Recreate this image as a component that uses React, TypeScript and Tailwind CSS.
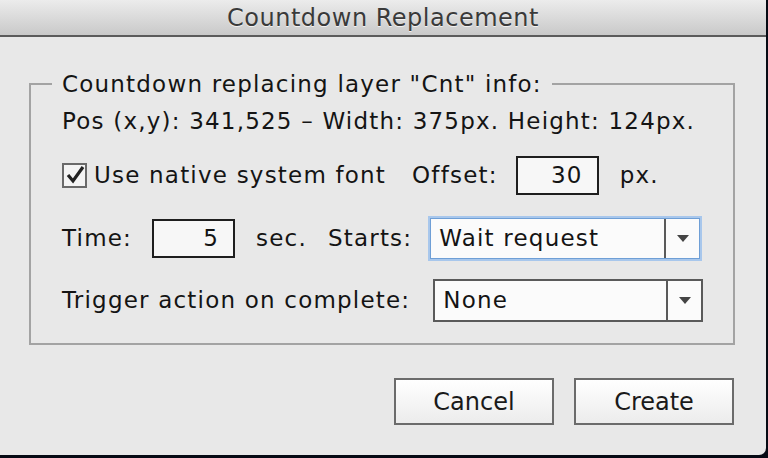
import React from "react";

const font = { fontFamily: '"DejaVu Sans", "Liberation Sans", sans-serif' };

function TextBox({ value }: { value: string }) {
  return (
    <div className="flex h-[39px] w-[83px] items-center justify-end border-2 border-[#1e1e1e] bg-[#f7f7f7] pr-[14px]">
      {value}
    </div>
  );
}

function Select({ value, focused }: { value: string; focused?: boolean }) {
  return (
    <div
      className={
        focused
          ? "flex h-[41px] w-[270px] items-stretch border border-[#6f9fd6] bg-[#fbfbfb] shadow-[0_0_0_2px_#a8c7ec]"
          : "flex h-[43px] w-[270px] items-stretch border-2 border-[#5a5a5a] bg-[#fbfbfb]"
      }
    >
      <div className="flex flex-1 items-center pl-[8px]">{value}</div>
      <div className="flex w-[35px] items-center justify-center border-l-2 border-[#5a5a5a]">
        <svg width="12" height="7" viewBox="0 0 12 7">
          <path d="M0 0 H12 L6 7 Z" fill="#444" />
        </svg>
      </div>
    </div>
  );
}

function Button({ label }: { label: string }) {
  return (
    <button className="flex h-[47px] w-[160px] items-center justify-center border-2 border-[#6b6b6b] bg-gradient-to-b from-[#ffffff] to-[#ececec] text-[24px] tracking-normal text-[#1a1a1a]">
      {label}
    </button>
  );
}

export default function App() {
  return (
    <div className="h-[458px] w-[768px] bg-[#060a14]" style={font}>
      <div className="flex h-[455px] w-[766px] flex-col overflow-hidden rounded-br-[7px] bg-[#e8e8e8] text-[23px] tracking-[1.2px] text-[#141414]">
        <div className="flex h-[37px] items-center justify-center border-b-2 border-[#5b5b5b] bg-gradient-to-b from-[#ececec] to-[#c9c9c9] text-[24px] tracking-[0.5px] text-[#3a3a3a] [text-shadow:0_1px_0_#f2f2f2]">
          Countdown Replacement
        </div>
        <div className="flex flex-1 flex-col pl-[29px] pr-[31px] pt-[34px]">
          <fieldset className="border-2 border-[#a3a3a3] pb-[21px] pl-[31px]">
            <legend className="ml-[-10px] px-[10px] leading-[26px]">
              Countdown replacing layer "Cnt" info:
            </legend>
            <div className="mt-[11px] leading-[26px]">
              Pos (x,y): 341,525 – Width: 375px. Height: 124px.
            </div>
            <div className="mt-[21px] flex h-[40px] items-center">
              <div className="flex h-[25px] w-[25px] items-center justify-center border-2 border-[#6a6a6a] bg-[#f4f4f4]">
                <svg width="20" height="18" viewBox="0 0 20 18">
                  <path d="M3 9 L8 15 L18 1" fill="none" stroke="#222" strokeWidth="3.2" />
                </svg>
              </div>
              <span className="ml-[7px]">Use native system font</span>
              <span className="ml-[26px]">Offset:</span>
              <div className="ml-[18px]">
                <TextBox value="30" />
              </div>
              <span className="ml-[21px]">px.</span>
            </div>
            <div className="mt-[22px] flex h-[42px] items-center">
              <span>Time:</span>
              <div className="ml-[20px]">
                <TextBox value="5" />
              </div>
              <span className="ml-[21px]">sec.</span>
              <span className="ml-[21px]">Starts:</span>
              <div className="ml-[18px]">
                <Select value="Wait request" focused />
              </div>
            </div>
            <div className="mt-[20px] flex h-[43px] items-center">
              <span>Trigger action on complete:</span>
              <div className="ml-[23px]">
                <Select value="None" />
              </div>
            </div>
          </fieldset>
          <div className="mt-[33px] flex justify-end gap-[20px] pr-[1px]">
            <Button label="Cancel" />
            <Button label="Create" />
          </div>
        </div>
      </div>
    </div>
  );
}
